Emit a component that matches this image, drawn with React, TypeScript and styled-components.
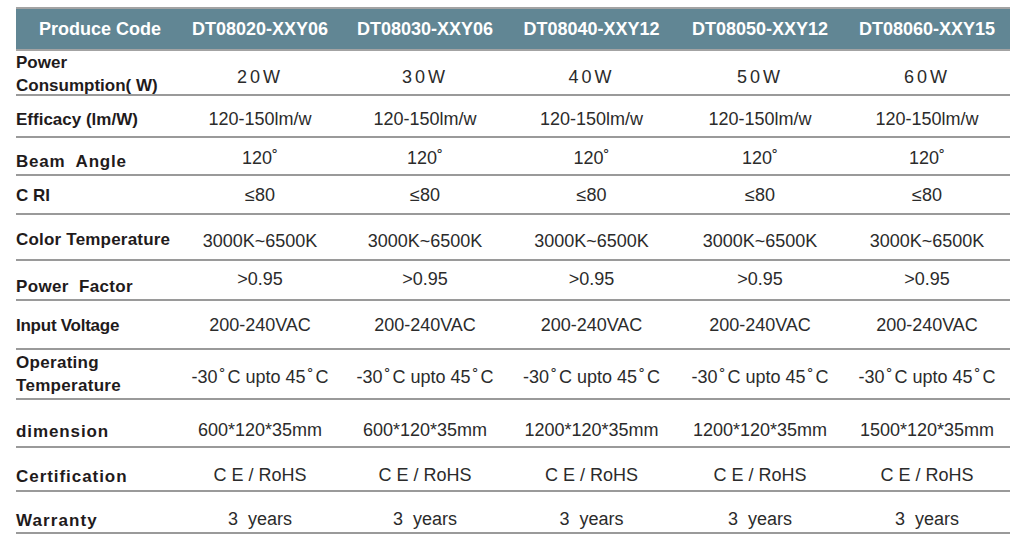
import React from 'react';
import styled, { createGlobalStyle } from 'styled-components';

type Row = {
  label: string[];
  values: React.ReactNode[];
  height: number;
  labelShift: number;
  valueShift: number;
  tracking?: number;
  spaced?: boolean;
};

const codes = ['DT08020-XXY06', 'DT08030-XXY06', 'DT08040-XXY12', 'DT08050-XXY12', 'DT08060-XXY15'];

const same = (v: React.ReactNode) => [v, v, v, v, v];

const Deg = styled.span`
  margin: 0 2px;
`;

const temp = (
  <>
    -30<Deg>˚</Deg>C upto 45<Deg>˚</Deg>C
  </>
);

const rows: Row[] = [
  { label: ['Power', 'Consumption( W)'], values: ['20W', '30W', '40W', '50W', '60W'], height: 45, labelShift: 0, valueShift: 3, spaced: true },
  { label: ['Efficacy (lm/W)'], values: same('120-150lm/w'), height: 42, labelShift: 3, valueShift: 3 },
  { label: ['Beam  Angle'], values: same('120˚'), height: 38, labelShift: 5, valueShift: 2, tracking: 0.75 },
  { label: ['C RI'], values: same('≤80'), height: 39, labelShift: 1, valueShift: 1 },
  { label: ['Color Temperature'], values: same('3000K~6500K'), height: 46, labelShift: 2, valueShift: 4, tracking: 0.2 },
  { label: ['Power  Factor'], values: same('>0.95'), height: 40, labelShift: 6, valueShift: -1, tracking: 0.35 },
  { label: ['Input Voltage'], values: same('200-240VAC'), height: 49, labelShift: 1, valueShift: 1, tracking: -0.25 },
  { label: ['Operating', 'Temperature'], values: same(temp), height: 50, labelShift: 0, valueShift: 3, tracking: 0.3 },
  {
    label: ['dimension'],
    values: ['600*120*35mm', '600*120*35mm', '1200*120*35mm', '1200*120*35mm', '1500*120*35mm'],
    height: 48,
    labelShift: 8,
    valueShift: 7,
    tracking: 0.9,
  },
  { label: ['Certification'], values: same('C E / RoHS'), height: 44, labelShift: 7, valueShift: 6, tracking: 0.95 },
  { label: ['Warranty'], values: same('3  years'), height: 42, labelShift: 8, valueShift: 7, tracking: 1.1 },
];

export default function App() {
  return (
    <>
      <GlobalStyle />
      <Page>
        <Table>
          <HeaderRow>
            <HeaderCell $first>Produce Code</HeaderCell>
            {codes.map((c) => (
              <HeaderCell key={c}>{c}</HeaderCell>
            ))}
          </HeaderRow>
          {rows.map((r) => (
            <BodyRow key={r.label.join(' ')} $height={r.height}>
              <LabelCell $shift={r.labelShift} $tracking={r.tracking ?? 0}>
                {r.label.map((line) => (
                  <span key={line}>{line}</span>
                ))}
              </LabelCell>
              {r.values.map((v, i) => (
                <ValueCell key={i} $shift={r.valueShift} $spaced={!!r.spaced}>
                  {v}
                </ValueCell>
              ))}
            </BodyRow>
          ))}
        </Table>
      </Page>
    </>
  );
}

const GlobalStyle = createGlobalStyle`
  html, body {
    margin: 0;
    background: #ffffff;
  }
  body {
    font-family: "Liberation Sans", Arial, sans-serif;
  }
`;

const Page = styled.div`
  padding: 7px 0 0 16px;
`;

const Table = styled.div`
  width: 994px;
  display: flex;
  flex-direction: column;
`;

const grid = `
  display: grid;
  grid-template-columns: 161px 166px 164px 169px 168px 166px;
  box-sizing: border-box;
`;

const HeaderRow = styled.div`
  ${grid}
  height: 44px;
  background: #618694;
  border-top: 2px solid #a3a3a3;
  border-bottom: 2px solid #a3a3a3;
`;

const HeaderCell = styled.div<{ $first?: boolean }>`
  display: flex;
  align-items: center;
  justify-content: center;
  box-sizing: border-box;
  padding: 1px 0 0 ${(p) => (p.$first ? '7px' : '0')};
  color: #ffffff;
  font-size: 18px;
  font-weight: 700;
  white-space: nowrap;
`;

const BodyRow = styled.div<{ $height: number }>`
  ${grid}
  height: ${(p) => p.$height}px;
  border-bottom: 2px solid #9a9a9a;
`;

const LabelCell = styled.div<{ $shift: number; $tracking: number }>`
  display: flex;
  flex-direction: column;
  justify-content: center;
  box-sizing: border-box;
  padding-top: ${(p) => Math.max(p.$shift * 2, 0)}px;
  padding-bottom: ${(p) => Math.max(-p.$shift * 2, 0)}px;
  color: #1f1b1c;
  font-size: 17px;
  font-weight: 700;
  line-height: 23px;
  letter-spacing: ${(p) => p.$tracking}px;
  white-space: pre;
`;

const ValueCell = styled.div<{ $shift: number; $spaced: boolean }>`
  display: flex;
  align-items: center;
  justify-content: center;
  box-sizing: border-box;
  padding-top: ${(p) => Math.max(p.$shift * 2, 0)}px;
  padding-bottom: ${(p) => Math.max(-p.$shift * 2, 0)}px;
  color: #2b2b2b;
  font-size: 18px;
  letter-spacing: ${(p) => (p.$spaced ? '3px' : '0')};
  white-space: pre;
`;
